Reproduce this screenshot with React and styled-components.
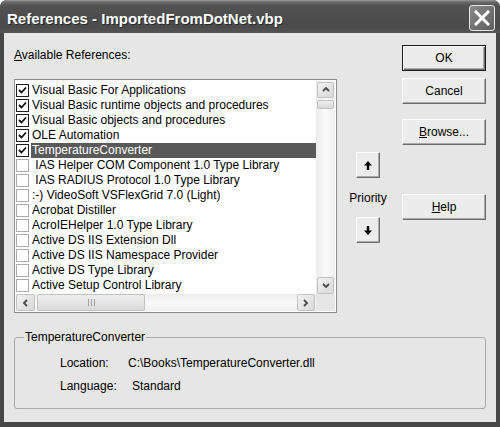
import React from "react";
import styled, { createGlobalStyle } from "styled-components";

const Global = createGlobalStyle`
  html, body { margin: 0; padding: 0; background: #ffffff; }
  body { font-family: "Liberation Sans", Arial, sans-serif; font-size: 12px; color: #000; }
  #root { width: 500px; height: 427px; }
`;

const Window = styled.div`
  width: 500px;
  height: 427px;
  display: flex;
  flex-direction: column;
  background: #474747;
  border-radius: 7px 7px 0 0;
  overflow: hidden;
  box-sizing: border-box;
`;

const TitleBar = styled.div`
  height: 33px;
  flex: none;
  display: flex;
  align-items: center;
  padding: 0 5px 0 7px;
  background: linear-gradient(#9a9a9a 0, #6a6a6a 2px, #525252 6px, #4a4a4a 26px, #545454 33px);
`;

const Title = styled.div`
  flex: 1;
  color: #fff;
  font-family: "Liberation Sans", Arial, sans-serif;
  font-weight: bold;
  font-size: 15px;
  padding-top: 4px;
  text-shadow: 1px 1px 0 #2a2a2a;
  white-space: nowrap;
`;

const CloseButton = styled.div`
  width: 24px;
  height: 24px;
  border: 1px solid #e8e8e8;
  border-radius: 3px;
  background: linear-gradient(135deg, #8a8a8a, #5e5e5e);
  display: flex;
  align-items: center;
  justify-content: center;
  margin-top: 2px;
`;

const Body = styled.div`
  flex: 1;
  margin: 0 4px 5px;
  background: #e6e6e6;
  padding: 12px 10px 13px;
  display: flex;
  flex-direction: column;
`;

const Top = styled.div`
  display: flex;
  height: 268px;
`;

const LeftCol = styled.div`
  width: 323px;
  display: flex;
  flex-direction: column;
`;

const Caption = styled.div`
  margin-top: 3px;
  line-height: 14px;
  height: 14px;
  white-space: nowrap;
`;

const ListBox = styled.div`
  margin-top: 17px;
  height: 234px;
  box-sizing: border-box;
  border: 1px solid #8c8c8c;
  background: #fff;
  padding: 1px;
  display: grid;
  grid-template-columns: 1fr 19px;
  grid-template-rows: 1fr 17px;
`;

const Items = styled.div`
  overflow: hidden;
  padding-top: 2px;
`;

const Row = styled.div`
  height: 15px;
  display: flex;
  align-items: center;
`;

const Box = styled.div`
  width: 11px;
  height: 11px;
  flex: none;
  border: 1px solid ${(p) => (p.$checked ? "#1e1e1e" : "#acacac")};
  background: #fff;
  display: flex;
  align-items: center;
  justify-content: center;
`;

const ItemText = styled.div`
  flex: 1;
  height: 15px;
  line-height: 15px;
  margin-left: 2px;
  padding-left: 1px;
  white-space: pre;
  background: ${(p) => (p.$selected ? "#595959" : "transparent")};
  color: ${(p) => (p.$selected ? "#fff" : "#000")};
`;

const VScroll = styled.div`
  display: flex;
  flex-direction: column;
  padding: 1px 1px 0 1px;
  gap: 2px;
  background: linear-gradient(90deg, #ececec, #fafafa 50%, #f0f0f0);
`;

const HScroll = styled.div`
  display: flex;
  padding: 0 1px 0 0;
  gap: 2px;
  background: linear-gradient(#ececec, #fafafa 50%, #f0f0f0);
`;

const Corner = styled.div`
  background: #e6e6e6;
`;

const ScrollBtn = styled.div`
  flex: none;
  width: ${(p) => p.$w || 17}px;
  height: ${(p) => p.$h || 16}px;
  box-sizing: border-box;
  border: 1px solid #c2c2c2;
  border-radius: 2px;
  background: linear-gradient(135deg, #f2f2f2, #d8d8d8);
  display: flex;
  align-items: center;
  justify-content: center;
`;

const Thumb = styled(ScrollBtn)`
  background: linear-gradient(#eeeeee, #dadada);
`;

const Spacer = styled.div`
  flex: 1;
`;

const RightArea = styled.div`
  flex: 1;
  display: flex;
`;

const PriorityCol = styled.div`
  flex: 1;
  display: flex;
  flex-direction: column;
  align-items: center;
  padding-right: 3px;
`;

const ArrowButton = styled.div`
  width: 24px;
  height: 26px;
  box-sizing: border-box;
  margin-top: ${(p) => p.$mt}px;
  border: 1px solid;
  border-color: #fdfdfd #6e6e6e #6e6e6e #fdfdfd;
  box-shadow: inset -1px -1px 0 #a9a9a9;
  background: #ececec;
  display: flex;
  align-items: center;
  justify-content: center;
`;

const PriorityLabel = styled.div`
  margin-top: 13px;
  line-height: 14px;
`;

const ButtonCol = styled.div`
  width: 84px;
  display: flex;
  flex-direction: column;
`;

const Button = styled.div`
  height: 26px;
  box-sizing: border-box;
  margin-top: ${(p) => p.$mt || 0}px;
  border: 1px solid;
  border-color: ${(p) => (p.$default ? "#1a1a1a" : "#fbfbfb #6c6c6c #6c6c6c #fbfbfb")};
  box-shadow: ${(p) =>
    p.$default
      ? "inset 1px 1px 0 #fbfbfb, inset -1px -1px 0 #6c6c6c, inset -2px -2px 0 #a9a9a9"
      : "inset -1px -1px 0 #a9a9a9"};
  background: #ececec;
  display: flex;
  align-items: center;
  justify-content: center;
  line-height: 14px;
`;

const Group = styled.fieldset`
  margin: 17px 0 0;
  padding: 12px 0 15px 9px;
  border: 1px solid #a8a8a8;
  border-radius: 3px;
  min-width: 0;
`;

const Legend = styled.legend`
  padding: 0 1px;
  line-height: 14px;
`;

const InfoRow = styled.div`
  display: flex;
  margin-left: 36px;
  margin-top: ${(p) => p.$mt || 0}px;
  line-height: 14px;
`;

const InfoLabel = styled.div`
  width: ${(p) => p.$w}px;
  flex: none;
`;

const Check = () => (
  <svg width="9" height="9" viewBox="0 0 9 9">
    <path d="M1 4 L3.5 6.5 L8 1.5" fill="none" stroke="#111" strokeWidth="1.8" />
  </svg>
);

const Chevron = ({ dir }) => {
  const paths = {
    up: "M1 5 L4 2 L7 5",
    down: "M1 2 L4 5 L7 2",
    left: "M5 1 L2 4 L5 7",
    right: "M2 1 L5 4 L2 7",
  };
  return (
    <svg width="8" height="8" viewBox="0 0 8 8">
      <path d={paths[dir]} fill="none" stroke="#4a4a4a" strokeWidth="1.8" />
    </svg>
  );
};

const Arrow = ({ up }) => (
  <svg width="8" height="9" viewBox="0 0 8 9" style={{ transform: up ? "none" : "rotate(180deg)" }}>
    <path d="M4 0 L8 4.5 L5.2 4.5 L5.2 9 L2.8 9 L2.8 4.5 L0 4.5 Z" fill="#000" />
  </svg>
);

const Grip = () => (
  <svg width="7" height="7" viewBox="0 0 7 7">
    <path d="M0.5 0 V7 M3.5 0 V7 M6.5 0 V7" stroke="#a0a0a0" strokeWidth="1" />
  </svg>
);

const items = [
  { name: "Visual Basic For Applications", checked: true },
  { name: "Visual Basic runtime objects and procedures", checked: true },
  { name: "Visual Basic objects and procedures", checked: true },
  { name: "OLE Automation", checked: true },
  { name: "TemperatureConverter", checked: true, selected: true },
  { name: " IAS Helper COM Component 1.0 Type Library" },
  { name: " IAS RADIUS Protocol 1.0 Type Library" },
  { name: ":-) VideoSoft VSFlexGrid 7.0 (Light)" },
  { name: "Acrobat Distiller" },
  { name: "AcroIEHelper 1.0 Type Library" },
  { name: "Active DS IIS Extension Dll" },
  { name: "Active DS IIS Namespace Provider" },
  { name: "Active DS Type Library" },
  { name: "Active Setup Control Library" },
];

export default function App() {
  return (
    <>
      <Global />
      <Window>
        <TitleBar>
          <Title>References - ImportedFromDotNet.vbp</Title>
          <CloseButton>
            <svg width="16" height="16" viewBox="0 0 16 16">
              <path d="M2 2 L14 14 M14 2 L2 14" stroke="#fff" strokeWidth="3" strokeLinecap="square" />
            </svg>
          </CloseButton>
        </TitleBar>
        <Body>
          <Top>
            <LeftCol>
              <Caption>
                <u>A</u>vailable References:
              </Caption>
              <ListBox>
                <Items>
                  {items.map((it, i) => (
                    <Row key={i}>
                      <Box $checked={it.checked}>{it.checked && <Check />}</Box>
                      <ItemText $selected={it.selected}>{it.name}</ItemText>
                    </Row>
                  ))}
                </Items>
                <VScroll>
                  <ScrollBtn $w={17} $h={16}>
                    <Chevron dir="up" />
                  </ScrollBtn>
                  <Thumb $w={17} $h={9} />
                  <Spacer />
                  <ScrollBtn $w={17} $h={17}>
                    <Chevron dir="down" />
                  </ScrollBtn>
                </VScroll>
                <HScroll>
                  <ScrollBtn $w={19} $h={17}>
                    <Chevron dir="left" />
                  </ScrollBtn>
                  <Thumb $w={108} $h={17}>
                    <Grip />
                  </Thumb>
                  <Spacer />
                  <ScrollBtn $w={18} $h={17}>
                    <Chevron dir="right" />
                  </ScrollBtn>
                </HScroll>
                <Corner />
              </ListBox>
            </LeftCol>
            <RightArea>
              <PriorityCol>
                <ArrowButton $mt={107}>
                  <Arrow up />
                </ArrowButton>
                <PriorityLabel>Priority</PriorityLabel>
                <ArrowButton $mt={12}>
                  <Arrow />
                </ArrowButton>
              </PriorityCol>
              <ButtonCol>
                <Button $default>OK</Button>
                <Button $mt={7}>Cancel</Button>
                <Button $mt={15}>
                  <span>
                    <u>B</u>rowse...
                  </span>
                </Button>
                <Button $mt={49}>
                  <span>
                    <u>H</u>elp
                  </span>
                </Button>
              </ButtonCol>
            </RightArea>
          </Top>
          <Group>
            <Legend>TemperatureConverter</Legend>
            <InfoRow>
              <InfoLabel $w={68}>Location:</InfoLabel>
              <div>{"C:\\Books\\TemperatureConverter.dll"}</div>
            </InfoRow>
            <InfoRow $mt={9}>
              <InfoLabel $w={72}>Language:</InfoLabel>
              <div>Standard</div>
            </InfoRow>
          </Group>
        </Body>
      </Window>
    </>
  );
}
